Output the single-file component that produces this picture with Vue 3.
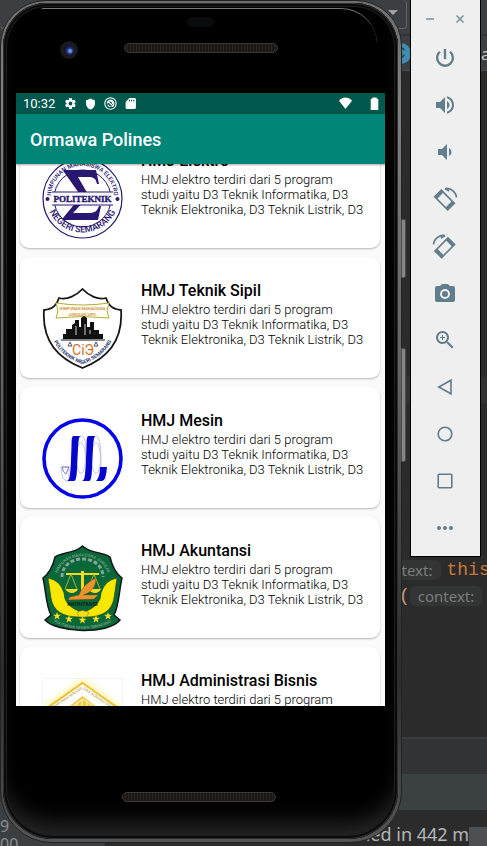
<script setup>
const description =
  'HMJ elektro terdiri dari 5 program\nstudi yaitu D3 Teknik Informatika, D3\nTeknik Elektronika, D3 Teknik Listrik, D3'

const organisations = [
  { id: 'elektro', name: 'HMJ Elektro' },
  { id: 'sipil', name: 'HMJ Teknik Sipil' },
  { id: 'mesin', name: 'HMJ Mesin' },
  { id: 'akuntansi', name: 'HMJ Akuntansi' },
  { id: 'bisnis', name: 'HMJ Administrasi Bisnis' }
]

const rotateBody = 'M1.5 7.5h20v11h-20zM5.5 9.2v7.6h12V9.2z'

const tools = [
  { name: 'Power', path: 'M13.2 3h-2.400v10h2.400V3zm4.700 2-1.600 1.600A6.700 6.700 0 0 1 18.700 12a6.700 6.700 0 1 1-11-5.400L6.100 5A9 9 0 0 0 3 12a9 9 0 1 0 18 0c0-2.740-1.230-5.300-3.100-7z' },
  { name: 'Volume up', path: 'M3 9v6h4l5 5V4L7 9H3zm13.500 3A4.500 4.500 0 0 0 14 7.970v8.050c1.480-.73 2.500-2.250 2.500-4.020zM14 3.230v2.060c2.890.86 5 3.540 5 6.710s-2.110 5.850-5 6.710v2.060c4.010-.91 7-4.490 7-8.770s-2.990-7.860-7-8.770z' },
  { name: 'Volume down', path: 'M18.500 12A4.500 4.500 0 0 0 16 7.970v8.050c1.480-.73 2.500-2.250 2.500-4.020zM5 9v6h4l5 5V4L9 9H5z' },
  { name: 'Rotate left', path: rotateBody, turn: 'rotate(45 11.5 13)', arc: 'M12 1.500C18 .8 23 5 23.500 10.500M12 1.500l4 2.500' },
  { name: 'Rotate right', path: rotateBody, turn: 'rotate(-45 12.5 13)', arc: 'M12 1.500C6 .8 1 5 .5 10.500M12 1.500 8 4' },
  { name: 'Take a photo', path: 'M9 3 7.200 5H4a2 2 0 0 0-2 2v12c0 1.100.9 2 2 2h16a2 2 0 0 0 2-2V7a2 2 0 0 0-2-2h-3.200L15 3H9zm3 5a5 5 0 1 1 0 10 5 5 0 0 1 0-10zm0 2a3 3 0 1 0 0 6 3 3 0 0 0 0-6z' },
  { name: 'Zoom', path: 'M15.500 14h-.79l-.28-.27A6.500 6.500 0 1 0 13.730 14.430l.27.28v.79l5 4.990L20.490 19l-4.990-5zm-6 0a4.500 4.500 0 1 1 0-9 4.500 4.500 0 0 1 0 9zM12 10h-2v2H9v-2H7V9h2V7h1v2h2v1z' },
  { name: 'Back', line: 'M18 5.200v13.600L5.800 12z' },
  { name: 'Home', line: 'M12 5.200a6.800 6.800 0 1 1 0 13.600 6.800 6.800 0 0 1 0-13.600z' },
  { name: 'Overview', line: 'M6.200 5.200h11.600a1 1 0 0 1 1 1v11.600a1 1 0 0 1-1 1H6.200a1 1 0 0 1-1-1V6.200a1 1 0 0 1 1-1z' },
  { name: 'More', path: 'M6 10a2 2 0 1 0 0 4 2 2 0 0 0 0-4zm6 0a2 2 0 1 0 0 4 2 2 0 0 0 0-4zm6 0a2 2 0 1 0 0 4 2 2 0 0 0 0-4z' }
]
</script>

<template>
  <div class="desktop">
    <div class="ide">
      <div class="ide-toolbar"><div class="combo"><span class="caret"></span></div></div>
      <div class="ide-tabs"><span class="class-icon">C</span><span class="tab-end">a</span></div>
      <div class="editor">
        <div class="current-line"></div>
        <div class="code first"><span class="hint">context:</span><span class="keyword">this</span></div>
        <div class="code second"><span class="paren">(</span><span class="hint">context:</span></div>
      </div>
      <div class="panel-head"></div>
      <div class="panel-tabs"></div>
      <div class="console">
        <div class="gutter"><span>9</span><span>00</span></div>
        <span class="build">finished in 442 ms</span>
        <span class="corner"></span>
      </div>
    </div>

    <main class="phone">
      <span class="side-key power"></span>
      <span class="side-key volume"></span>
      <div class="body">
        <div class="bezel-top">
          <span class="camera"></span>
          <span class="sensor"></span>
          <span class="speaker"></span>
        </div>
        <div class="screen">
          <div class="status">
            <span class="time">10:32</span>
            <svg viewBox="0 0 24 24" class="status-icon"><path d="M19.4 13a7.500 7.500 0 0 0 0-2l2.100-1.600a.5.5 0 0 0 .1-.6l-2-3.500a.5.5 0 0 0-.6-.2l-2.500 1a7.300 7.300 0 0 0-1.700-1l-.4-2.600a.5.5 0 0 0-.5-.5h-4a.5.5 0 0 0-.5.5L9 5.100a7.700 7.700 0 0 0-1.700 1l-2.500-1a.5.5 0 0 0-.6.2l-2 3.500a.5.5 0 0 0 .1.6L4.500 11a8 8 0 0 0 0 2l-2.200 1.600a.5.5 0 0 0-.1.6l2 3.500c.1.200.4.300.6.200l2.500-1a7.300 7.300 0 0 0 1.700 1l.4 2.600c0 .3.200.5.5.5h4c.3 0 .5-.2.500-.5l.4-2.600a7.700 7.700 0 0 0 1.700-1l2.500 1c.2.100.5 0 .6-.2l2-3.500a.5.5 0 0 0-.1-.6zM12 15.500a3.500 3.500 0 1 1 0-7 3.500 3.500 0 0 1 0 7z" /></svg>
            <svg viewBox="0 0 24 24" class="status-icon shield"><path d="M12 1 3 5v6c0 5.500 3.800 10.700 9 12 5.200-1.300 9-6.500 9-12V5z" /></svg>
            <svg viewBox="0 0 24 24" class="status-icon"><circle cx="12" cy="12" r="10.500" fill="none" stroke="#fff" stroke-width="2" /><path d="M6 12a6 6 0 0 1 10-4.500A6 6 0 0 1 14 18M7 14a6 6 0 0 0 5 4M7.500 8.500l9 8M10 8a4 4 0 0 1 5.500 5" fill="none" stroke="#fff" stroke-width="2.200" /></svg>
            <svg viewBox="0 0 24 24" class="status-icon"><path fill-rule="evenodd" d="M20 2H10L3 9v11a2 2 0 0 0 2 2h15a2 2 0 0 0 2-2V4a2 2 0 0 0-2-2zm-9 6H9V5h2zm4 0h-2V5h2zm4 0h-2V5h2z" /></svg>
            <svg viewBox="0 0 24 24" class="status-icon wifi"><path d="M12 22 0 7C7-1 17-1 24 7z" /></svg>
            <svg viewBox="0 0 24 24" class="status-icon"><path d="M16 3V1H8v2H6a1 1 0 0 0-1 1v19a1 1 0 0 0 1 1h12a1 1 0 0 0 1-1V4a1 1 0 0 0-1-1z" /></svg>
          </div>
          <header class="app-bar"><h1>Ormawa Polines</h1></header>
          <div class="viewport">
            <ul class="cards">
              <li v-for="org in organisations" :key="org.id" class="card">
                <div class="logo">
                  <svg v-if="org.id === 'elektro'" viewBox="0 0 81 81">
                    <defs>
                      <path id="el-top" d="M9.500 45a31.500 31.500 0 1 1 62 0" />
                      <path id="el-low" d="M4 38a36.500 36.500 0 1 0 73 0" />
                    </defs>
                    <g fill="none" stroke="#2a176f">
                      <circle cx="40.500" cy="40.500" r="39.500" stroke-width="1.200" />
                      <circle cx="40.500" cy="40.500" r="28.500" />
                    </g>
                    <g fill="#2a176f" font-family="Roboto, sans-serif">
                      <text font-size="6" font-weight="500" text-anchor="middle"><textPath href="#el-top" startOffset="50%">HIMPUNAN MAHASISWA ELEKTRO</textPath></text>
                      <text font-size="9" font-weight="500" text-anchor="middle"><textPath href="#el-low" startOffset="50%">NEGERI SEMARANG</textPath></text>
                      <path d="M22 12h32l3 14h-2c-1-5-3-7-8-7H36l11 19-16 17h16c6 0 8-2 10-7h2l-3 14H21v-2l18-22-17-24z" />
                      <circle cx="5.500" cy="41" r="2" /><circle cx="75.500" cy="41" r="2" />
                      <path fill="#fff" d="M10 34h61v13H10z" />
                      <path d="M10 33.500h61v1H10zM10 46.500h61v1H10z" />
                      <text x="40.500" y="44" font-size="9" font-weight="700" font-family="Liberation Serif, serif" text-anchor="middle" class="outlined">POLITEKNIK</text>
                    </g>
                  </svg>
                  <svg v-else-if="org.id === 'sipil'" viewBox="0 0 81 81">
                    <defs><path id="si-low" d="M9 44c3 15 13 26 31.500 32C59 70 69 59 73 44" /></defs>
                    <path d="M40.500 1C34 8 25 12 17 10c-2 6-5 11-15 12-2 28 10 47 38.500 58C69 69 81 50 79 22c-10-1-13-6-15-12-8 2-17-2-23.500-9z" fill="#fff" stroke="#171717" stroke-width="1.800" />
                    <path d="M14 15q26.500 4 53 0l-2 8 2 7q-26.500-3-53 0l2-7z" fill="#fffef0" stroke="#b1ad3b" />
                    <g fill="#cf7d2e" font-family="Roboto, sans-serif" text-anchor="middle" font-weight="500">
                      <text x="40.500" y="21.500" font-size="4">HIMPUNAN MAHASISWA</text>
                      <text x="40.500" y="27.500" font-size="4">JURUSAN SIPIL</text>
                    </g>
                    <path d="M21 51v-5h3v-5h6v-4l3-2v-3h4v7h2v-9l3-2 3 2v9h3v-5h4v8h5v4h4v5z" fill="#111" />
                    <path d="M19 52h44M23 50h36" stroke="#111" stroke-width="1.200" />
                    <path d="M34 38v9M43 36v11M48 42v4" stroke="#fff" stroke-width=".8" />
                    <path d="m28 54-2 4h4zm26 0-2 4h4z" fill="none" stroke="#555" />
                    <text x="41" y="67" fill="#cf7427" font-size="14" font-family="Roboto, sans-serif" text-anchor="middle">CiЭ</text>
                    <text fill="#28386d" font-size="5" font-weight="700" font-family="Roboto, sans-serif" text-anchor="middle"><textPath href="#si-low" startOffset="50%">POLITEKNIK NEGERI SEMARANG</textPath></text>
                  </svg>
                  <svg v-else-if="org.id === 'mesin'" viewBox="0 0 81 81">
                    <circle cx="40.500" cy="40.500" r="38.500" fill="#fff" stroke="#0505e8" stroke-width="3.600" />
                    <g fill="none" stroke="#b4b9da" stroke-width=".8">
                      <ellipse cx="39" cy="40" rx="4.500" ry="15.500" /><ellipse cx="54" cy="40" rx="4.500" ry="15.500" />
                      <path d="M34 57c0-10 0-39 5-39s5 10 5 25M49 57c0-10 0-39 5-39s5 20 5 32M19 49h8v14h-3q-5-3-5-14z" />
                    </g>
                    <path d="M31 18h8c-3 0-2.500 6-4 33-.5 8-1 12-3 12h-7c3-1 3-5 4-20 1-18 0-23 2-25zM46 18h8c-3 0-2.500 6-4 33-.5 8-1 12-3 12h-7c3-1 3-5 4-20 1-18 0-23 2-25zM58 49h7q-1 14-5 14h-6q4-4 4-14z" fill="#0505cb" />
                    <path d="M20 49h7l-3 7q-3-1-4-7z" fill="none" stroke="#7a80c4" />
                  </svg>
                  <svg v-else-if="org.id === 'akuntansi'" viewBox="0 0 81 88">
                    <defs>
                      <path id="ak-top" d="M15 30C21 5 60 5 66 30" />
                      <path id="ak-low" d="M10 75c12 12 49 12 61 0" />
                    </defs>
                    <path d="M40.500 1C32 9 20 7 13 12c-2 9-5 16-12 21 3 13 3 28 8 37l-6 5c12 13 63 15 75 0l-6-5c5-9 5-24 8-37-7-5-10-12-12-21C61 7 49 9 40.500 1z" fill="#08683a" stroke="#101818" stroke-width="1.500" />
                    <path d="M20 32c0-24 41-24 41 0" fill="none" stroke="#8aa397" stroke-width="3" stroke-dasharray="4 2" />
                    <path d="M6 33q12 2 16 15 0 13 17 19l-2 5Q12 72 9 53zM75 33q-12 2-16 15 0 13-17 19l2 5Q69 72 72 53z" fill="#f8e800" stroke="#344c0d" stroke-width=".7" />
                    <path d="M39 26h3v24h-3zM24 28h33v2H24zM23 44h13q-2 4-6 4t-7-4zM46 44h13q-2 4-6 4t-7-4z" fill="#f5da20" />
                    <path d="m29 29-6 15m6-15 6 15m17-15-6 15m6-15 6 15" fill="none" stroke="#d8c421" stroke-width=".8" />
                    <path d="M54 33q-13 6-17 17l-9 2-2 3 26-1 4-4H41q13-4 13-17z" fill="#e7952c" stroke="#92500d" stroke-width=".5" />
                    <text x="40.500" y="61" font-size="5.500" font-weight="700" fill="#101d13" text-anchor="middle" font-family="Roboto, sans-serif">AKUNTANSI</text>
                    <path d="M35 68q5-5 12 0l-3 4h-7z" fill="#f5df19" stroke="#776b0c" stroke-width=".5" />
                    <path d="m15 70 1 2.800h3l-2.400 1.800.9 2.900-2.500-1.800-2.500 1.800.9-2.900-2.400-1.800h3zM27 73l1 2.800h3l-2.400 1.800.9 2.900-2.500-1.800-2.500 1.800.9-2.900-2.400-1.800h3zM40.500 74l1 2.800h3l-2.400 1.800.9 2.900-2.500-1.800-2.500 1.800.9-2.900-2.400-1.800h3zM54 73l1 2.800h3l-2.400 1.800.9 2.900-2.500-1.800-2.500 1.800.9-2.900-2.400-1.800h3zM66 70l1 2.800h3l-2.400 1.800.9 2.900-2.500-1.800-2.500 1.800.9-2.900-2.400-1.800h3z" transform="translate(0 -3)" fill="#ffdf20" />
                    <g fill="#9cb09a" font-size="4" font-family="Roboto, sans-serif" text-anchor="middle">
                      <text><textPath href="#ak-top" startOffset="50%">HIMPUNAN MAHASISWA JURUSAN</textPath></text>
                      <text><textPath href="#ak-low" startOffset="50%">POLITEKNIK NEGERI SEMARANG</textPath></text>
                    </g>
                  </svg>
                  <svg v-else viewBox="0 0 81 81">
                    <defs>
                      <path id="bi-top" d="M8 33 40.500 11 73 33" />
                      <filter id="bi-glow"><feGaussianBlur stdDeviation="3" /></filter>
                    </defs>
                    <path d="M.5.5h80v80H.500z" fill="#fff" stroke="#f4f4f4" />
                    <path d="M40.500 5 76 30v25L40.500 77 5 55V30z" fill="none" stroke="#fff29b" stroke-width="6" filter="url(#bi-glow)" />
                    <path d="M40.500 5 76 30v25L40.500 77 5 55V30z" fill="#fff" stroke="#efc130" stroke-width="2" />
                    <path d="m40.500 18 14 11v25h-28V29z" fill="#f0c945" />
                    <path d="M30 28v24m5-28v28m5-30v30m5-28v28m5-24v24M27 31l14-10 14 10" fill="none" stroke="#fff8da" />
                    <text font-size="4" fill="#b6a13f" font-family="Roboto, sans-serif" text-anchor="middle"><textPath href="#bi-top" startOffset="50%">HIMPUNAN MAHASISWA ADMINISTRASI</textPath></text>
                  </svg>
                </div>
                <div class="info">
                  <h2>{{ org.name }}</h2>
                  <p>{{ description }}</p>
                </div>
              </li>
            </ul>
          </div>
        </div>
        <div class="bezel-bottom"><span class="speaker"></span></div>
      </div>
    </main>

    <aside class="tools">
      <div class="window-controls">
        <button type="button" aria-label="Minimise"><svg viewBox="0 0 10 10"><path d="M1 5h8" /></svg></button>
        <button type="button" aria-label="Close"><svg viewBox="0 0 10 10"><path d="m1.500 1.500 7 7m0-7-7 7" /></svg></button>
      </div>
      <button v-for="tool in tools" :key="tool.name" type="button" class="tool" :aria-label="tool.name">
        <svg viewBox="0 0 24 24">
          <path v-if="tool.path" :d="tool.path" :transform="tool.turn" fill-rule="evenodd" />
          <path v-if="tool.arc" :d="tool.arc" class="arc" />
          <path v-if="tool.line" :d="tool.line" class="line" />
        </svg>
      </button>
    </aside>
  </div>
</template>

<style>
body {
  margin: 0;
  background: #2b2b2b;
}
</style>

<style scoped>
* {
  box-sizing: border-box;
}
.desktop {
  position: relative;
  height: 100vh;
  min-height: 700px;
  overflow: hidden;
  font-family: Roboto, sans-serif;
}
.ide {
  display: flex;
  flex-direction: column;
  height: 100%;
  background: #2b2b2b;
}
.ide-toolbar {
  flex: none;
  height: 36px;
  padding-right: 80px;
  background: #3c3f41;
  border-bottom: 2px solid #313335;
}
.combo {
  display: flex;
  justify-content: flex-end;
  height: 29px;
  padding: 10px 8px;
  border: 1px solid #646668;
  border-top: 0;
  border-left: 0;
  border-radius: 4px;
}
.caret {
  width: 0;
  height: 0;
  border: 5px solid transparent;
  border-top-color: #9da0a3;
}
.ide-tabs {
  flex: none;
  display: flex;
  align-items: center;
  justify-content: space-between;
  height: 35px;
  padding-left: 390px;
  background: #3c3f41;
  border-bottom: 1px solid #4b4d4f;
}
.class-icon {
  width: 21px;
  height: 21px;
  border-radius: 50%;
  background: #3d8eaf;
  color: #1f3b48;
  font-size: 15px;
  line-height: 21px;
  text-align: center;
}
.tab-end {
  width: 6px;
  overflow: hidden;
  color: #c9c5bd;
  font: 17px "Noto Sans", sans-serif;
}
.editor {
  flex: 1;
  padding-top: 306px;
  overflow: hidden;
}
.current-line {
  height: 26px;
  margin-bottom: 154px;
  background: #323232;
}
.code {
  display: flex;
  align-items: center;
  gap: 6px;
  height: 26px;
  font: 18px "Liberation Mono", monospace;
  white-space: nowrap;
}
.first {
  padding-left: 368px;
}
.second {
  gap: 0;
  padding-left: 399px;
}
.hint {
  padding: 0 8px;
  border-radius: 6px;
  background: #333434;
  color: #7a7d7e;
  font: 15px/20px "Noto Sans", sans-serif;
}
.keyword {
  color: #cc7832;
}
.paren {
  color: #c8a078;
}
.panel-head {
  flex: none;
  height: 37px;
  background: #313335;
  border-top: 2px solid #3b3d3f;
}
.panel-tabs {
  flex: none;
  height: 36px;
  background: #3b4043;
}
.console {
  flex: none;
  display: flex;
  align-items: flex-end;
  height: 36px;
  overflow: hidden;
  color: #b4b7b9;
  font: 18px/24px "Noto Sans", sans-serif;
}
.gutter {
  display: flex;
  flex-direction: column;
  align-self: stretch;
  width: 105px;
  padding-top: 7px;
  color: #8a8d8f;
  background: #3c3f41;
  font-size: 16px;
  line-height: 18px;
}
.build {
  flex: 1;
  padding-left: 219px;
  white-space: nowrap;
  overflow: hidden;
}
.corner {
  flex: none;
  width: 18px;
  height: 19px;
  background: #4d5052;
}

.phone {
  position: absolute;
  inset: 0 85px 3px 0;
  padding: 2px 3px 3px 2px;
  border: 1px solid #222;
  border-radius: 46px 46px 52px 52px;
  background: linear-gradient(#6e6e6e, #808080 12%, #626262 45%, #2c2c2c 80%, #555);
}
.body {
  display: flex;
  flex-direction: column;
  height: 100%;
  padding: 5px 13px 6px;
  border-radius: 44px 44px 50px 50px;
  background: #000;
  box-shadow: inset 0 0 0 1px #2e2e2e, inset 0 0 0 3px #0b0b0b, inset 0 0 0 4px #1e1e1e, inset 0 -24px 22px -8px #262626;
}
.side-key {
  position: absolute;
  right: -5px;
  width: 5px;
  border: 1px solid #4c4c4c;
  border-radius: 0 2px 2px 0;
  background: #858585;
}
.power {
  top: 218px;
  height: 59px;
}
.volume {
  top: 347px;
  height: 114px;
}
.bezel-top {
  flex: none;
  display: grid;
  grid-template-columns: 62px 1fr 80px;
  grid-template-rows: 28px auto;
  justify-items: center;
  align-items: start;
  height: 85px;
  margin: 0 8px 0 26px;
  border-top: 1px solid #777;
  border-radius: 0 36px 0 0;
}
.camera {
  grid-row: 1 / 3;
  justify-self: start;
  width: 18px;
  height: 18px;
  margin-top: 32px;
  margin-left: 18px;
  border: 4px solid #191a1d;
  border-radius: 50%;
  background: radial-gradient(circle at 60% 60%, #6e91e8 0 15%, #222d74 35%, #0b0e24 75%);
}
.sensor {
  grid-column: 2;
  width: 27px;
  height: 10px;
  margin-top: 8px;
  border-radius: 5px;
  background: #0a0b0e;
}
.speaker {
  grid-column: 2;
  width: 154px;
  height: 10px;
  margin-top: 6px;
  border: 1px solid #3b3836;
  border-radius: 5px;
  background: repeating-linear-gradient(90deg, #1a1715 0 2px, #292420 2px 3px);
}
.bezel-bottom {
  flex: none;
  display: flex;
  justify-content: center;
  align-items: flex-start;
  height: 127px;
  padding: 80px 4px 0 0;
}
.screen {
  flex: 1;
  display: flex;
  flex-direction: column;
  min-height: 0;
  background: #fafafa;
}
.status {
  flex: none;
  display: flex;
  align-items: center;
  gap: 7px;
  height: 21px;
  padding: 0 4px 0 7px;
  background: #00574b;
  color: #fff;
}
.time {
  margin-right: 2px;
  font-size: 13px;
  line-height: 21px;
}
.status-icon {
  width: 13px;
  height: 13px;
  fill: #fff;
}
.wifi {
  margin-left: auto;
  margin-right: 9px;
}
.shield {
  height: 12px;
}
.app-bar {
  flex: none;
  position: relative;
  display: flex;
  align-items: center;
  height: 50px;
  padding: 2px 14px 0;
  background: #008577;
  color: #fff;
  box-shadow: 0 1px 2px rgba(0, 0, 0, 0.35);
}
h1 {
  margin: 0;
  font-size: 18px;
  font-weight: 500;
  line-height: 24px;
}
.viewport {
  flex: 1;
  min-height: 0;
  overflow: hidden;
}
.cards {
  display: flex;
  flex-direction: column;
  gap: 9px;
  margin: -37px 5px 0 4px;
  padding: 0;
  list-style: none;
}
.card {
  flex: none;
  display: grid;
  grid-template-columns: 81px 1fr;
  gap: 18px;
  height: 121px;
  padding-left: 22px;
  border-radius: 9px;
  background: #fff;
  box-shadow: 0 1px 2px rgba(0, 0, 0, 0.28);
}
.logo {
  display: flex;
  align-items: center;
  padding-top: 22px;
}
.logo svg {
  display: block;
  width: 100%;
}
.outlined {
  stroke: #2a176f;
  stroke-width: 0.4;
}
.info {
  padding-top: 24px;
  white-space: nowrap;
  overflow: hidden;
}
h2 {
  margin: 0;
  color: #000;
  font-size: 16px;
  font-weight: 500;
  line-height: 20px;
}
p {
  margin: 1px 0 0;
  color: #000;
  font-size: 13px;
  font-weight: 300;
  line-height: 15px;
  white-space: pre;
}

.tools {
  position: absolute;
  top: 0;
  right: 6px;
  width: 71px;
  padding: 0 1px 5px 0;
  border: 1px solid #000;
  border-top: 0;
  background: #efefef;
}
.window-controls {
  display: flex;
  justify-content: space-between;
  height: 34px;
  padding: 14px 14px 0;
}
button {
  display: flex;
  justify-content: center;
  align-items: center;
  padding: 0;
  border: 0;
  background: none;
}
.window-controls button {
  width: 10px;
  height: 10px;
}
.window-controls svg {
  width: 10px;
  height: 10px;
  stroke: #78909c;
  stroke-width: 1.5;
}
.tool {
  width: 100%;
  height: 47px;
}
.tool svg {
  width: 24px;
  height: 24px;
  fill: #607d8b;
  overflow: visible;
}
.tool .line,
.tool .arc {
  fill: none;
  stroke: #607d8b;
  stroke-width: 1.6;
}
</style>
